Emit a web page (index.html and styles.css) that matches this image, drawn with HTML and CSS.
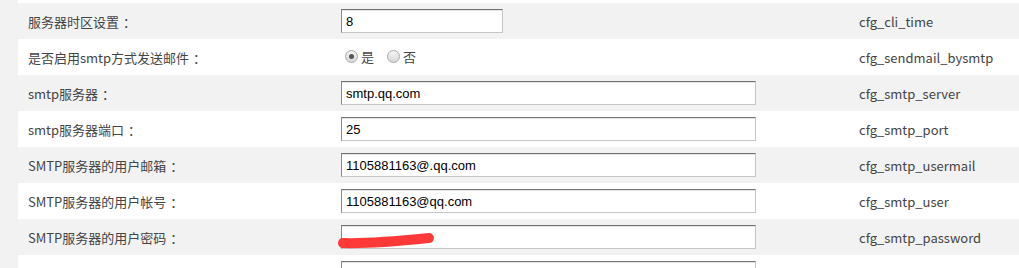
FILE: index.html
```html
<!DOCTYPE html>
<html lang="zh-CN">

<head>
    <meta charset="UTF-8">
    <title>邮件设置</title>
    <link rel="stylesheet" href="styles.css">
</head>

<body>
    <div class="page">
        <table class="cfg">
            <tr class="odd">
                <td class="lab">&nbsp;</td>
                <td class="val"></td>
                <td class="key"></td>
            </tr>
            <tr class="even">
                <td class="lab">服务器时区设置<span class="colon">：</span></td>
                <td class="val"><input type="text" class="txt short" value="8"></td>
                <td class="key">cfg_cli_time</td>
            </tr>
            <tr class="odd">
                <td class="lab">是否启用smtp方式发送邮件<span class="colon">：</span></td>
                <td class="val">
                    <label class="rd"><span class="dot on"></span>是</label>
                    <label class="rd"><span class="dot"></span>否</label>
                </td>
                <td class="key">cfg_sendmail_bysmtp</td>
            </tr>
            <tr class="even">
                <td class="lab">smtp服务器<span class="colon">：</span></td>
                <td class="val"><input type="text" class="txt" value="smtp.qq.com"></td>
                <td class="key">cfg_smtp_server</td>
            </tr>
            <tr class="odd">
                <td class="lab">smtp服务器端口<span class="colon">：</span></td>
                <td class="val"><input type="text" class="txt" value="25"></td>
                <td class="key">cfg_smtp_port</td>
            </tr>
            <tr class="even">
                <td class="lab">SMTP服务器的用户邮箱<span class="colon">：</span></td>
                <td class="val"><input type="text" class="txt" value="1105881163@.qq.com"></td>
                <td class="key">cfg_smtp_usermail</td>
            </tr>
            <tr class="odd">
                <td class="lab">SMTP服务器的用户帐号<span class="colon">：</span></td>
                <td class="val"><input type="text" class="txt" value="1105881163@qq.com"></td>
                <td class="key">cfg_smtp_user</td>
            </tr>
            <tr class="even">
                <td class="lab">SMTP服务器的用户密码<span class="colon">：</span></td>
                <td class="val pw">
                    <input type="text" class="txt" value="">
                    <svg class="mask" width="104" height="22" viewBox="0 0 104 22">
                        <path d="M6 13 C 30 14, 62 11, 92 8" stroke="#ff3838" stroke-width="10" stroke-linecap="round" fill="none"/>
                    </svg>
                </td>
                <td class="key">cfg_smtp_password</td>
            </tr>
            <tr class="odd">
                <td class="lab">邮件发送超时时间<span class="colon">：</span></td>
                <td class="val"><input type="text" class="txt" value="30"></td>
                <td class="key">cfg_smtp_timeout</td>
            </tr>
        </table>
    </div>
</body>

</html>
```

FILE: styles.css
```css
body {
    margin: 0;
    background-color: #f2f2f2;
    overflow: hidden;
}

.page {
    padding-left: 18px;
    margin-top: -33px;
}

.cfg {
    width: 1001px;
    border-collapse: collapse;
    font-family: "Noto Sans CJK SC", "Noto Sans", sans-serif;
    font-size: 13px;
    color: #444444;
}

.cfg td {
    height: 36px;
    padding: 0 10px;
    vertical-align: middle;
    white-space: nowrap;
}

.odd {
    background-color: #ffffff;
}

.even {
    background-color: #f2f2f2;
}

.lab {
    width: 293px;
}

/* the colon sits in the middle of its box in the original font */
.colon {
    margin-left: 4px;
}

.val {
    width: 498px;
}

.pw {
    position: relative;
}

/* inset look of old style inputs */
.txt {
    box-sizing: border-box;
    width: 415px;
    height: 24px;
    margin: 0;
    padding: 0 4px;
    border: 1px solid #c6c6c6;
    border-top-color: #727272;
    border-left-color: #8a8a8a;
    box-shadow: inset 0 1px 0 #e6e6e6;
    background: #ffffff;
    font-family: "Liberation Sans", Arial, sans-serif;
    font-size: 13px;
    color: #000000;
    vertical-align: middle;
}

.short {
    width: 162px;
}

.rd {
    display: inline-flex;
    align-items: center;
    margin-left: 4px;
    margin-right: 6px;
    color: #444444;
}

.dot {
    box-sizing: border-box;
    width: 13px;
    height: 13px;
    margin-right: 3px;
    border-radius: 50%;
    border: 1px solid #a9a9a9;
    background: linear-gradient(#f4f4f4, #d8d8d8);
    position: relative;
}

.dot.on::after {
    content: "";
    position: absolute;
    left: 3px;
    top: 3px;
    width: 5px;
    height: 5px;
    border-radius: 50%;
    background: #555555;
}

.mask {
    position: absolute;
    left: 6px;
    top: 11px;
}

.key {
    padding-left: 10px;
}
```
